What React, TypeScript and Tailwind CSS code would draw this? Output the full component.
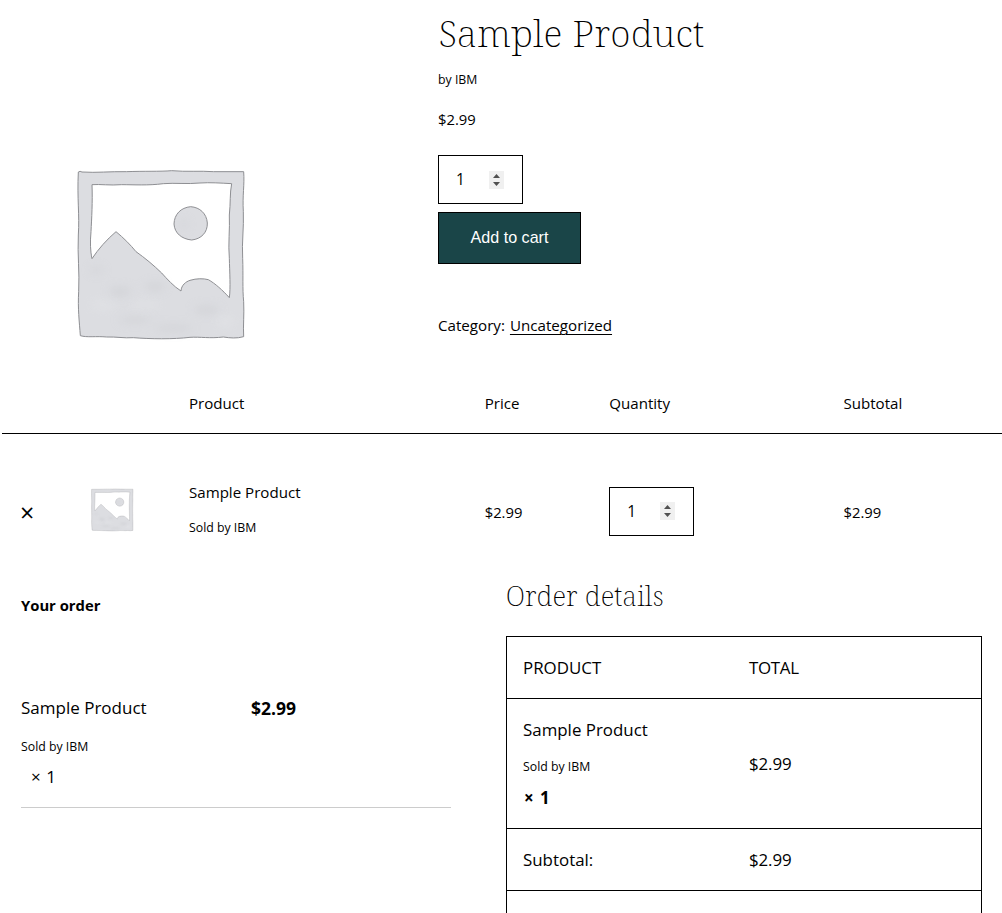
type PlaceholderProps = { className: string; id: string; strokeWidth: number };

function PlaceholderImage({ className, id, strokeWidth }: PlaceholderProps) {
  return (
    <svg viewBox="0 0 600 600" className={className} aria-label="Product placeholder">
      <defs>
        <filter id={`${id}-soft`} x="-50%" y="-50%" width="200%" height="200%">
          <feGaussianBlur stdDeviation="14" />
        </filter>
      </defs>
      <path
        fillRule="evenodd"
        fill="#dcdde1"
        stroke="#8e8f93"
        strokeWidth={strokeWidth}
        strokeLinejoin="round"
        d="M55 51 Q60 47 66 51 C110 54 150 49 200 50 C250 48 300 50 335 47 C380 51 420 47 460 50 L551 50 C554 90 547 120 550 170 C552 220 545 260 548 310 C550 360 547 400 551 440 C553 480 549 510 551 545 C530 551 510 549 490 546 C450 551 420 545 390 547 C340 553 270 552 220 548 C190 550 170 545 140 546 C110 543 80 548 61 542 C58 500 53 460 56 410 C59 350 52 300 55 240 C59 180 51 130 55 51 Z
           M96 89 C98 140 95 190 93 230 C90 260 91 290 96 311 C115 282 140 254 168 230 C190 248 212 270 228 290 C255 309 280 330 305 354 C320 371 342 395 363 408 C364 390 378 380 390 376 C410 370 430 370 445 374 C466 386 487 405 508 428 C512 400 509 350 508 310 C504 270 510 220 508 180 C512 145 509 115 515 86 C480 84 450 82 420 84 C380 88 345 83 310 86 C265 92 220 89 185 89 C150 92 120 87 96 89 Z"
      />
      <path
        fill="#dcdde1"
        stroke="#8e8f93"
        strokeWidth={strokeWidth}
        d="M392 155 C420 157 440 176 442 204 C443 232 424 252 395 255 C365 252 344 235 342 207 C343 178 362 158 392 155 Z"
      />
      <g fill="#c9cacf" opacity="0.5" filter={`url(#${id}-soft)`}>
        <ellipse cx="180" cy="410" rx="34" ry="14" />
        <ellipse cx="285" cy="395" rx="30" ry="12" />
        <ellipse cx="225" cy="495" rx="50" ry="9" />
        <ellipse cx="440" cy="465" rx="40" ry="12" />
        <ellipse cx="340" cy="520" rx="60" ry="9" />
        <ellipse cx="110" cy="345" rx="20" ry="9" />
        <ellipse cx="372" cy="208" rx="9" ry="14" />
      </g>
      <g fill="#e6e7ea" opacity="0.4" filter={`url(#${id}-soft)`}>
        <ellipse cx="130" cy="450" rx="40" ry="14" />
        <ellipse cx="255" cy="450" rx="45" ry="12" />
        <ellipse cx="495" cy="500" rx="30" ry="16" />
      </g>
    </svg>
  );
}

function QuantityBox() {
  return (
    <div className="flex h-[49px] w-[85px] items-center border border-black pr-[18px] pl-[17px]">
      <span className="mb-px flex-1 text-[15.5px] leading-6">1</span>
      <svg viewBox="0 0 15 18" className="h-[18px] w-[15px]" aria-hidden="true">
        <rect width="15" height="18" fill="#f0f0f0" />
        <path d="M4 7 L7.5 3 L11 7 Z M4 11 L7.5 15 L11 11 Z" fill="#505050" />
      </svg>
    </div>
  );
}

function ProductSummary() {
  return (
    <section className="flex h-[373px]">
      <div className="w-[438px] shrink-0 pt-[155px] pl-[60px]">
        <PlaceholderImage className="size-[200px]" id="large" strokeWidth={3} />
      </div>
      <div className="flex flex-col items-start">
        <h1 className="mt-[11px] font-['Noto_Serif',serif] text-[37.5px] leading-[44px] font-extralight tracking-[0.26px]">
          Sample Product
        </h1>
        <p className="mt-[15px] text-[12.3px] leading-5">by IBM</p>
        <p className="mt-[17px] text-[14.8px] leading-6">$2.99</p>
        <div className="mt-6">
          <QuantityBox />
        </div>
        <button className="mt-2 h-[52px] w-[143px] border border-black bg-[#1a4548] pb-0.5 font-['Liberation_Sans',sans-serif] text-[16.1px] font-normal text-white">
          Add to cart
        </button>
        <p className="mt-12 flex gap-[5px] text-[15.15px] leading-[26px]">
          <span>Category:</span>
          <a className="underline decoration-1 underline-offset-[3px]">Uncategorized</a>
        </p>
      </div>
    </section>
  );
}

function CartTable() {
  const columns = "ml-0.5 grid grid-cols-[85px_102px_295.7px_124.6px_234.2px_1fr]";
  return (
    <section className="text-[15.1px] leading-6">
      <div className={`${columns} h-[61px] items-center border-b border-black`}>
        <span className="col-start-3">Product</span>
        <span>Price</span>
        <span>Quantity</span>
        <span>Subtotal</span>
      </div>
      <div className={`${columns} h-[143px] items-center pt-[13px]`}>
        <span className="pl-[18px] text-[25px] font-medium">×</span>
        <PlaceholderImage className="mb-[5px] size-[50px]" id="thumb" strokeWidth={3} />
        <div className="mb-1.5">
          <p>Sample Product</p>
          <p className="mt-3.5 text-[12.3px] leading-5">Sold by IBM</p>
        </div>
        <span className="text-[14.8px]">$2.99</span>
        <div className="mb-0.5">
          <QuantityBox />
        </div>
        <span className="text-[14.8px]">$2.99</span>
      </div>
    </section>
  );
}

function YourOrder() {
  return (
    <div className="w-[430px]">
      <h3 className="mt-4 text-[14.8px] leading-6 font-bold">Your order</h3>
      <div className="mt-[78px] flex border-b border-[#cccccc] pb-[17px] text-[17px] leading-[26px]">
        <div className="w-[230px]">
          <p>Sample Product</p>
          <p className="mt-4 text-[12.3px] leading-5">Sold by IBM</p>
          <p className="mt-[7px] pl-2.5 tracking-[0.6px]">× 1</p>
        </div>
        <span className="text-[17.5px] font-bold">$2.99</span>
      </div>
    </div>
  );
}

function OrderDetails() {
  const row = "grid grid-cols-[226px_1fr] items-center border-b border-black pl-4";
  return (
    <div className="w-[476px]">
      <h2 className="pt-px font-['Noto_Serif',serif] text-[27px] leading-9 font-extralight tracking-[0.2px]">
        Order details
      </h2>
      <div className="mt-[22px] border border-black text-[16.9px] leading-[26px]">
        <div className={`${row} h-[62px]`}>
          <span>PRODUCT</span>
          <span className="tracking-[-0.3px]">TOTAL</span>
        </div>
        <div className={`${row} h-[130px]`}>
          <div>
            <p>Sample Product</p>
            <p className="mt-3.5 text-[12.3px] leading-5">Sold by IBM</p>
            <p className="mt-2 pl-px font-bold tracking-[1px]">× 1</p>
          </div>
          <span className="tracking-[-0.1px]">$2.99</span>
        </div>
        <div className={`${row} h-[62px]`}>
          <span>Subtotal:</span>
          <span className="tracking-[-0.1px]">$2.99</span>
        </div>
        <div className="h-[62px]" />
      </div>
    </div>
  );
}

export default function App() {
  return (
    <main className="h-[913px] w-[1002px] overflow-hidden bg-white font-['Open_Sans',sans-serif] font-[390] text-black">
      <ProductSummary />
      <CartTable />
      <section className="flex gap-[55px] pl-[21px]">
        <YourOrder />
        <OrderDetails />
      </section>
    </main>
  );
}
